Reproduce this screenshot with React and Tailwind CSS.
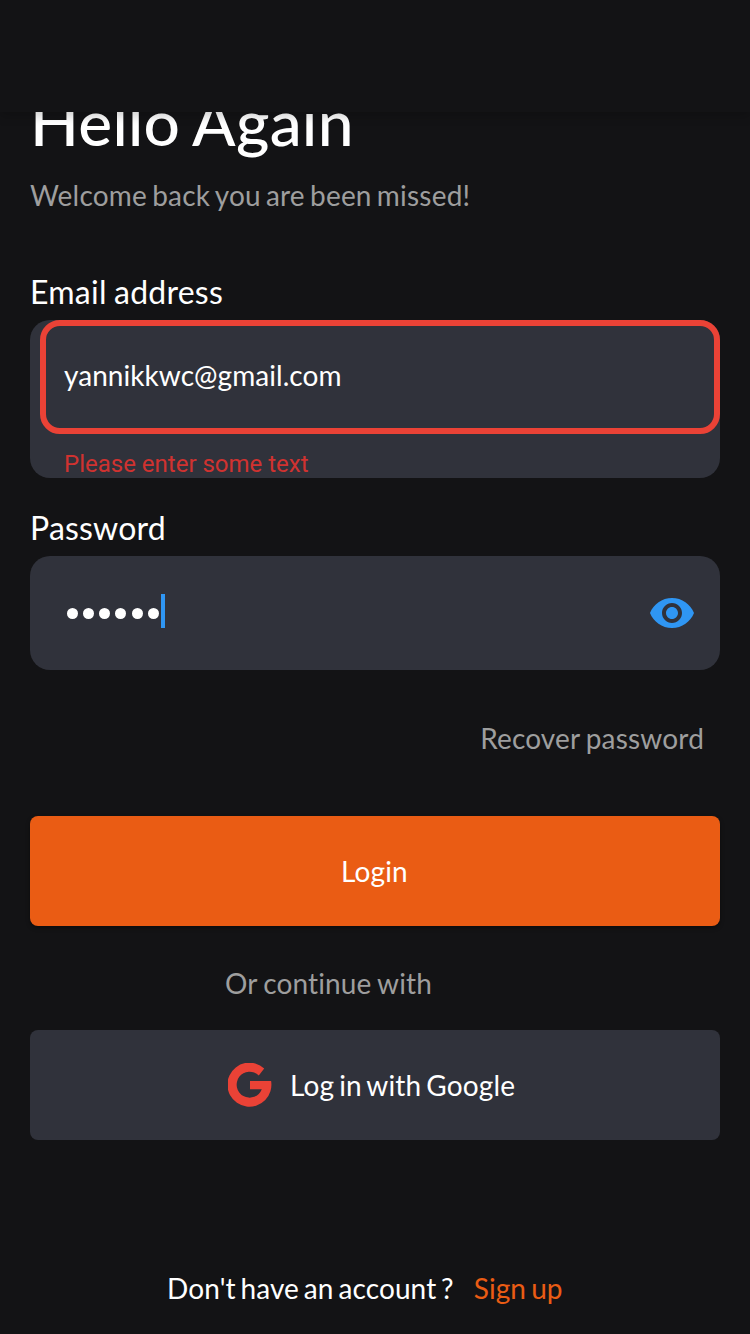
function EyeIcon() {
  return (
    <svg className="h-12 w-12 shrink-0" viewBox="0 0 24 24" fill="#2f96f3">
      <path d="M12 4.5C7 4.5 2.73 7.61 1 12c1.73 4.39 6 7.5 11 7.5s9.27-3.11 11-7.5c-1.73-4.39-6-7.5-11-7.5zM12 17c-2.76 0-5-2.24-5-5s2.24-5 5-5 5 2.24 5 5-2.24 5-5 5zm0-8c-1.66 0-3 1.34-3 3s1.34 3 3 3 3-1.34 3-3-1.34-3-3-3z" />
    </svg>
  );
}

function GoogleIcon() {
  return (
    <svg className="h-11 w-11 shrink-0" viewBox="0 0 44 44" fill="#ea4236">
      <path d="M36.2 5.4A22 22 0 1 0 43.1 18H22V26.3H33.8A13 13 0 1 1 30.8 12.4Z" />
    </svg>
  );
}

export default function App() {
  return (
    <div className="flex h-[1334px] w-[750px] flex-col overflow-hidden bg-[#131315] font-['Lato',sans-serif] text-[28px] leading-[34px] text-white [font-variant-ligatures:none]">
      <header className="relative z-10 h-28 shrink-0 bg-[#131315] shadow-[0_4px_10px_rgba(0,0,0,0.2)]" />
      <main className="-mt-[29px] flex flex-col px-[30px]">
        <h1 className="h-[95px] text-[64px] leading-[77px] font-medium tracking-[0.25px] [word-spacing:-2.3px]">Hello Again</h1>
        <p className="h-[95px] tracking-[0.2px] text-[#9e9e9e] [word-spacing:-2.2px]">Welcome back you are been missed!</p>

        <label className="h-[47px] text-[32px] leading-[38px] tracking-[0.25px] [word-spacing:-1.2px]">Email address</label>
        <div className="flex h-[158px] flex-col rounded-[20px] bg-[#30323b] pl-[10px]">
          <div className="flex h-[114px] items-center rounded-[20px] border-[6px] border-[#ea4236] pl-[18px]">
            <span className="pb-[5px] tracking-[0.05px]">yannikkwc@gmail.com</span>
          </div>
          <p className="pt-4 pl-6 font-['Roboto',sans-serif] text-[24px] leading-[28px] text-[#d03230]">
            Please enter some text
          </p>
        </div>

        <label className="mt-[31px] h-[47px] text-[32px] leading-[38px] tracking-[0.2px]">Password</label>
        <div className="flex h-[114px] items-center justify-between rounded-[20px] bg-[#30323b] pr-6 pl-[36.5px]">
          <div className="flex items-center pb-[4px]">
            <div className="flex gap-[5.3px] pt-1">
              {[0, 1, 2, 3, 4, 5].map((i) => (
                <span key={i} className="h-[11px] w-[11px] rounded-full bg-white" />
              ))}
            </div>
            <span className="ml-[2px] h-[34px] w-1 bg-[#2f96f3]" />
          </div>
          <EyeIcon />
        </div>

        <a className="mt-[51px] self-end pr-4 tracking-[0.18px] text-[#9e9e9e] [word-spacing:-1.5px]">Recover password</a>

        <button className="mt-[61px] h-[110px] rounded-lg bg-[#ea5c14] pr-px text-center tracking-[0.15px] shadow-[0_2px_4px_rgba(0,0,0,0.4)]">
          Login
        </button>
        <p className="mt-10 pl-[195px] tracking-[0.15px] text-[#9e9e9e] [word-spacing:-1.2px]">Or continue with</p>
        <button className="mt-[30px] flex h-[110px] items-center rounded-lg bg-[#30323b] pl-[198px]">
          <GoogleIcon />
          <span className="ml-[18px] tracking-[0.18px] [word-spacing:-2.4px]">Log in with Google</span>
        </button>

        <div className="mt-[131px] flex pl-[137px] [word-spacing:-2.5px]">
          <span className="tracking-[0.12px]">Don't have an account ?</span>
          <a className="ml-5 tracking-[0.05px] [word-spacing:-2px] text-[#ea5c14]">Sign up</a>
        </div>
      </main>
    </div>
  );
}
